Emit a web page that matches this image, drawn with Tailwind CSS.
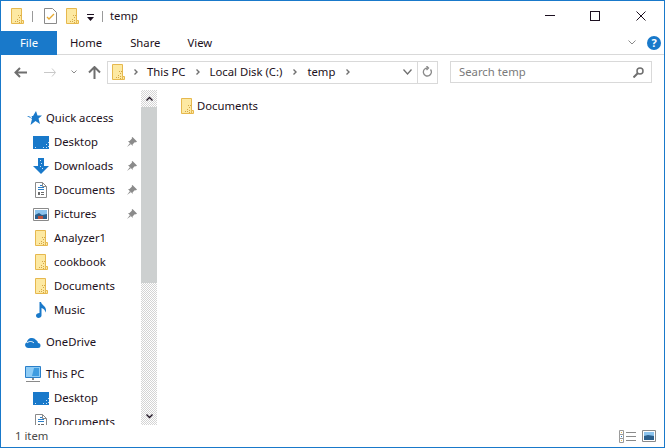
<!DOCTYPE html>
<html lang="en">
<head>
    <meta charset="UTF-8">
    <title>temp</title>
    <script src="https://cdn.jsdelivr.net/npm/@tailwindcss/browser@4"></script>
</head>
<body class="bg-white overflow-hidden">
    <svg width="0" height="0" class="absolute">
        <symbol id="folder" viewBox="0 0 13 16">
            <path d="M.5.5h10v12h2v3H.5z" fill="#fde9a2" stroke="#e6b84e"/>
            <path d="M10.500 12.500v3" stroke="#e6b84e"/>
            <path d="M8 9h1v1H8zM6 11h1v1H6zM8 12h1v1H8zM4 13h1v1H4zM6 13h1v1H6zM8 14h1v1H8zM9 7h1v1H9zM7 7h1v1H7z" fill="#d3a648"/>
        </symbol>
        <symbol id="desktop" viewBox="0 0 16 13">
            <path d="M0 0h16v13H0z" fill="#1979ca"/>
            <path d="M2 11h1v1H2zM10 11h1v1h-1zM13 11h1v1h-1zM13 8h1v1h-1zM15 6h1v1h-1zM15 10h1v1h-1z" fill="#cfe4f6"/>
        </symbol>
        <symbol id="doc" viewBox="0 0 12 16">
            <path d="M.5.5h7l4 4v11H.5z" fill="#fff" stroke="#8a8a8a"/>
            <path d="M7.500.5v4h4" fill="none" stroke="#8a8a8a"/>
            <path d="M5 3h2v1H5zM3 5h6v1H3zM3 7h6v1H3z" fill="#2a7fc9"/>
            <path d="M3 10h2v3H3zM6 10h3v1H6zM6 12h3v1H6z" fill="#6b6b6b"/>
        </symbol>
        <symbol id="pictures" viewBox="0 0 16 13">
            <path d="M.5.5h15v12H.5z" fill="#fff" stroke="#8a8a8a"/>
            <path d="M2 2h12v5H2z" fill="#8cc4ee"/>
            <path d="M2 7l4-2 3 2 5-1v5H2z" fill="#2b5f8c"/>
            <path d="M5 8h5v3H5z" fill="#b9533f"/>
        </symbol>
        <symbol id="pin" viewBox="0 0 10 10">
            <path d="M5.500 0L10 4.500 8.800 5.500 8 5 5.500 7.500 5.800 9 1 4.200 2.500 4 5 1.500 4.700.8z" fill="#8b8b8b"/>
            <path d="M3 6L0 10l4-3z" fill="#8b8b8b"/>
        </symbol>
        <symbol id="crumb" viewBox="0 0 4 6">
            <path d="M.5.500L3 3 .5 5.500" fill="none" stroke="#6f6f6f" stroke-width="1.400"/>
        </symbol>
    </svg>

    <div class="w-[665px] h-[448px] border border-[#1979ca] flex flex-col overflow-hidden font-['Noto_Sans',sans-serif] text-[11.3px] leading-4 text-[#1c1020]">
        <!-- title bar -->
        <div class="h-[30px] flex items-center shrink-0">
            <svg class="w-[13px] h-4 ml-[10px]"><use href="#folder"/></svg>
            <div class="w-px h-[11px] bg-[#9a9a9a] ml-[8px]"></div>
            <svg class="w-[13px] h-4 ml-[11px]" viewBox="0 0 13 16">
                <path d="M.5.5h8l4 4v11H.5z" fill="#fff" stroke="#8a8a8a"/>
                <path d="M3 9l2 2 5-5" fill="none" stroke="#e6a92f" stroke-width="1.300"/>
            </svg>
            <svg class="w-[13px] h-4 ml-[9px]"><use href="#folder"/></svg>
            <svg class="w-[7px] h-[7px] ml-[8px] mt-[3px]" viewBox="0 0 7 7">
                <path d="M0 0h7v1H0zM0 3h7L3.500 7z" fill="#1c1020"/>
            </svg>
            <div class="w-px h-[11px] bg-[#9a9a9a] ml-[8px]"></div>
            <span class="ml-[7px]">temp</span>
            <div class="ml-auto flex items-center pb-[1px]">
                <div class="w-[45px] flex justify-center"><div class="w-[10px] h-px bg-[#1c1020]"></div></div>
                <div class="w-[46px] flex justify-center"><div class="w-[10px] h-[10px] border border-[#1c1020]"></div></div>
                <div class="w-[46px] flex justify-center">
                    <svg class="w-[10px] h-[10px]" viewBox="0 0 10 10"><path d="M.5.500l9 9M9.500.500l-9 9" stroke="#1c1020" fill="none"/></svg>
                </div>
            </div>
        </div>

        <!-- ribbon tabs -->
        <div class="h-6 flex items-stretch border-b border-[#d9d9d9] shrink-0">
            <div class="w-[56px] h-6 bg-[#1979ca] text-white flex items-center justify-center">File</div>
            <div class="ml-[13px] flex items-center">Home</div>
            <div class="ml-[28px] flex items-center">Share</div>
            <div class="ml-[27px] flex items-center">View</div>
            <div class="ml-auto flex items-center pr-[3px]">
                <svg class="w-[8px] h-[5px]" viewBox="0 0 8 5"><path d="M.5.500L4 4 7.500.5" fill="none" stroke="#8a8a8a"/></svg>
                <div class="ml-[11px] w-[14px] h-[14px] rounded-full bg-[#1979ca] text-white flex items-center justify-center text-[11px] font-bold">?</div>
            </div>
        </div>

        <!-- address row -->
        <div class="h-[35px] flex items-center shrink-0 pb-[1px]">
            <svg class="w-[13px] h-[11px] ml-[13px]" viewBox="0 0 13 11"><path d="M6 1L1.500 5.500 6 10M2 5.500h11" fill="none" stroke="#6f6f6f" stroke-width="2"/></svg>
            <svg class="w-[12px] h-[9px] ml-[17px]" viewBox="0 0 12 9"><path d="M8 .5l3.500 4L8 8.500M0 4.500h11" fill="none" stroke="#c8c8c8"/></svg>
            <svg class="w-[6px] h-[4px] ml-[15px]" viewBox="0 0 6 4"><path d="M.5.500L3 3 5.500.5" fill="none" stroke="#8a8a8a"/></svg>
            <svg class="w-[13px] h-[13px] ml-[11px]" viewBox="0 0 13 13"><path d="M1 6.500L6.500 1 12 6.500M6.500 1.500V13" fill="none" stroke="#6f6f6f" stroke-width="2"/></svg>
            <div class="ml-[6px] w-[331px] h-[23px] border border-[#d9d9d9] flex items-center">
                <svg class="w-[13px] h-4 ml-[4px]"><use href="#folder"/></svg>
                <svg class="w-1 h-[6px] ml-[9px]"><use href="#crumb"/></svg>
                <span class="ml-[9px]">This PC</span>
                <svg class="w-1 h-[6px] ml-[10px]"><use href="#crumb"/></svg>
                <span class="ml-[10px]">Local Disk (C:)</span>
                <svg class="w-1 h-[6px] ml-[11px]"><use href="#crumb"/></svg>
                <span class="ml-[10px]">temp</span>
                <svg class="w-1 h-[6px] ml-[11px]"><use href="#crumb"/></svg>
                <svg class="w-[9px] h-[6px] ml-auto mr-[5px]" viewBox="0 0 9 6"><path d="M.5.500L4.500 5 8.500.5" fill="none" stroke="#6f6f6f" stroke-width="1.300"/></svg>
                <div class="w-[20px] h-full border-l border-[#d9d9d9] flex items-center justify-center">
                    <svg class="w-[11px] h-[12px]" viewBox="0 0 11 12"><path d="M8.500 3.500a4 4 0 1 1-3-1.500M4.500 0l2 2-2 2" fill="none" stroke="#8a8a8a" stroke-width="1.300"/></svg>
                </div>
            </div>
            <div class="ml-[12px] w-[202px] h-[22px] border border-[#d9d9d9] flex items-center pl-[8px] pr-[7px] text-[#7a7a7a]">
                <span>Search temp</span>
                <svg class="w-[11px] h-[11px] ml-auto" viewBox="0 0 11 11"><circle cx="7" cy="4" r="3" fill="none" stroke="#6f6f6f" stroke-width="1.500"/><path d="M5 6l-4.500 4.500" stroke="#6f6f6f" stroke-width="2"/></svg>
            </div>
        </div>

        <!-- main area -->
        <div class="flex-1 min-h-0 flex">
            <div class="w-[140px] pt-4 overflow-hidden shrink-0">
                <div class="h-6 flex items-center pl-[26px]">
                    <svg class="w-[15px] h-[14px]" viewBox="0 0 15 14"><path d="M9 0l1.500 4.500H15l-3.500 3 1.500 5.500-4.500-3L3.500 14l1.500-6L0 5h6z" fill="#1979ca"/><path d="M0 4l5 2M1 8l4-1.500" stroke="#fff"/></svg>
                    <span class="ml-[4px]">Quick access</span>
                </div>
                <div class="h-6 flex items-center pl-[32px]">
                    <svg class="w-4 h-[13px]"><use href="#desktop"/></svg>
                    <span class="ml-[5px]">Desktop</span>
                    <svg class="w-[10px] h-[10px] ml-auto mr-[4px]"><use href="#pin"/></svg>
                </div>
                <div class="h-6 flex items-center pl-[32px]">
                    <svg class="w-4 h-4" viewBox="0 0 16 16"><path d="M5 0h6v8h5l-8 8-8-8h5z" fill="#1979ca"/><path d="M7 2h1v1H7zM8 5h1v1H8zM7 8h1v1H7zM9 10h1v1H9z" fill="#cfe4f6"/></svg>
                    <span class="ml-[5px]">Downloads</span>
                    <svg class="w-[10px] h-[10px] ml-auto mr-[4px]"><use href="#pin"/></svg>
                </div>
                <div class="h-6 flex items-center pl-[34px]">
                    <svg class="w-3 h-4"><use href="#doc"/></svg>
                    <span class="ml-[7px]">Documents</span>
                    <svg class="w-[10px] h-[10px] ml-auto mr-[4px]"><use href="#pin"/></svg>
                </div>
                <div class="h-6 flex items-center pl-[32px]">
                    <svg class="w-4 h-[13px]"><use href="#pictures"/></svg>
                    <span class="ml-[5px]">Pictures</span>
                    <svg class="w-[10px] h-[10px] ml-auto mr-[4px]"><use href="#pin"/></svg>
                </div>
                <div class="h-6 flex items-center pl-[34px]">
                    <svg class="w-[13px] h-4"><use href="#folder"/></svg>
                    <span class="ml-[6px]">Analyzer1</span>
                </div>
                <div class="h-6 flex items-center pl-[34px]">
                    <svg class="w-[13px] h-4"><use href="#folder"/></svg>
                    <span class="ml-[6px]">cookbook</span>
                </div>
                <div class="h-6 flex items-center pl-[34px]">
                    <svg class="w-[13px] h-4"><use href="#folder"/></svg>
                    <span class="ml-[6px]">Documents</span>
                </div>
                <div class="h-6 flex items-center pl-[34px]">
                    <svg class="w-[13px] h-4" viewBox="0 0 13 16"><path d="M4.500 0H6c.5 3 5 4 5 8 0 1-.5 2-1 2.500.5-2-1-4-3.500-4.500v7.500c0 1.500-1.500 2.500-3 2.500S1 15 1 13.500 2.500 11 4.500 11z" fill="#1979ca"/></svg>
                    <span class="ml-[6px]">Music</span>
                </div>
                <div class="h-6 flex items-center pl-[24px] mt-[8px]">
                    <svg class="w-4 h-[11px]" viewBox="0 0 16 11"><path d="M3 11a3 3 0 0 1-1-5.800A5 5 0 0 1 11 3a3.500 3.500 0 0 1 2 3 2.500 2.500 0 0 1 0 5z" fill="#1979ca"/><path d="M2 6c2-2 5-2 7 0" stroke="#fff" fill="none"/></svg>
                    <span class="ml-[5px]">OneDrive</span>
                </div>
                <div class="h-6 flex items-center pl-[24px] mt-[8px]">
                    <svg class="w-4 h-4" viewBox="0 0 16 16"><path d="M.5.500h15v11H.5z" fill="#8fccf5" stroke="#2a7fc9"/><path d="M9 2h5v8H7z" fill="#3f9ce0"/><path d="M7 12h2v2H7z" fill="#8a8a8a"/><path d="M1 15h14v1H1z" fill="#8a8a8a"/></svg>
                    <span class="ml-[5px]">This PC</span>
                </div>
                <div class="h-6 flex items-center pl-[32px]">
                    <svg class="w-4 h-[13px]"><use href="#desktop"/></svg>
                    <span class="ml-[5px]">Desktop</span>
                </div>
                <div class="h-6 flex items-center pl-[34px]">
                    <svg class="w-3 h-4"><use href="#doc"/></svg>
                    <span class="ml-[7px]">Documents</span>
                </div>
            </div>

            <!-- scrollbar -->
            <div class="w-4 flex flex-col shrink-0 bg-[repeating-conic-gradient(#d4d4d4_0_25%,#ffffff_0_50%)] bg-[length:2px_2px]">
                <div class="h-[17px] flex items-center justify-center">
                    <svg class="w-[7px] h-[5px]" viewBox="0 0 7 5"><path d="M.5 4.500l3-3 3 3" fill="none" stroke="#1c1020" stroke-width="1.300"/></svg>
                </div>
                <div class="h-[176px] bg-[#cdd0d0]"></div>
                <div class="mt-auto h-[17px] flex items-center justify-center">
                    <svg class="w-[7px] h-[5px]" viewBox="0 0 7 5"><path d="M.5.500l3 3 3-3" fill="none" stroke="#1c1020" stroke-width="1.300"/></svg>
                </div>
            </div>

            <!-- file list -->
            <div class="flex-1 pl-[24px] pt-2">
                <div class="h-4 flex items-center">
                    <svg class="w-[13px] h-4"><use href="#folder"/></svg>
                    <span class="ml-[3px]">Documents</span>
                </div>
            </div>
        </div>

        <!-- status bar -->
        <div class="h-[22px] flex items-center shrink-0 pl-[14px] pr-[8px] text-[#4a4a4a]">
            <span>1 item</span>
            <svg class="w-[17px] h-[13px] ml-auto" viewBox="0 0 17 13">
                <path d="M.5.500h4v4h-4zM.5 4.500h4v4h-4zM.5 8.500h4v4h-4z" fill="#fff" stroke="#9a9a9a"/>
                <path d="M2 2h1v1H2z" fill="#e6b84e"/><path d="M2 6h1v1H2z" fill="#2a7fc9"/><path d="M2 10h1v1H2z" fill="#e6b84e"/>
                <path d="M7 2.500h10M7 6.500h10M7 10.500h10" stroke="#8a8a8a"/>
            </svg>
            <svg class="w-[14px] h-[12px] ml-[6px]" viewBox="0 0 14 12"><path d="M.5.500h13v11H.5z" fill="#fff" stroke="#8a8a8a" stroke-width="1"/><path d="M2 2h10v4H2z" fill="#8cc4ee"/><path d="M2 6l4-1 6 1v4H2z" fill="#2b5f8c"/></svg>
        </div>
    </div>
</body>
</html>
